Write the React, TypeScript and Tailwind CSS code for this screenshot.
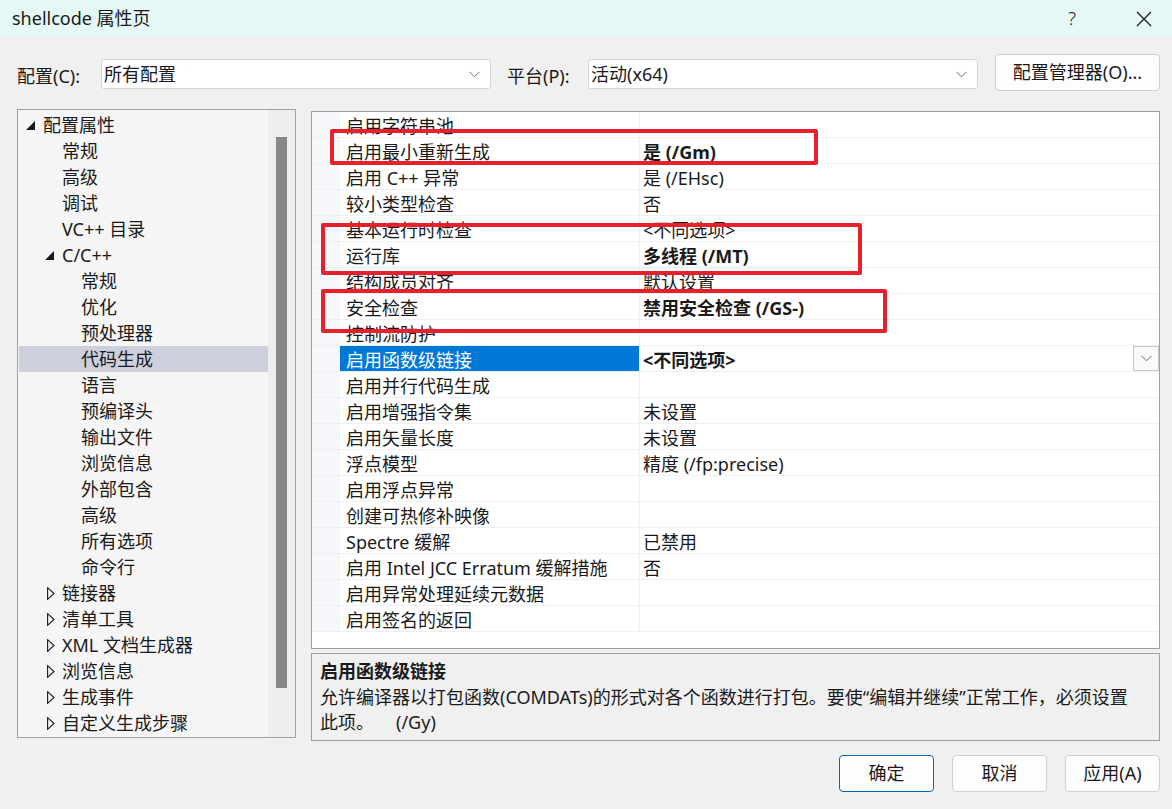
import React from "react";

const treeItems: { label: string; level: number; glyph?: "open" | "closed"; selected?: boolean }[] = [
  { label: "配置属性", level: 0, glyph: "open" },
  { label: "常规", level: 1 },
  { label: "高级", level: 1 },
  { label: "调试", level: 1 },
  { label: "VC++ 目录", level: 1 },
  { label: "C/C++", level: 1, glyph: "open" },
  { label: "常规", level: 2 },
  { label: "优化", level: 2 },
  { label: "预处理器", level: 2 },
  { label: "代码生成", level: 2, selected: true },
  { label: "语言", level: 2 },
  { label: "预编译头", level: 2 },
  { label: "输出文件", level: 2 },
  { label: "浏览信息", level: 2 },
  { label: "外部包含", level: 2 },
  { label: "高级", level: 2 },
  { label: "所有选项", level: 2 },
  { label: "命令行", level: 2 },
  { label: "链接器", level: 1, glyph: "closed" },
  { label: "清单工具", level: 1, glyph: "closed" },
  { label: "XML 文档生成器", level: 1, glyph: "closed" },
  { label: "浏览信息", level: 1, glyph: "closed" },
  { label: "生成事件", level: 1, glyph: "closed" },
  { label: "自定义生成步骤", level: 1, glyph: "closed" },
];

const levelPad = ["pl-[7px]", "pl-[26px]", "pl-[45px]"];

const rows: { name: string; value: string; bold?: boolean; selected?: boolean }[] = [
  { name: "启用字符串池", value: "" },
  { name: "启用最小重新生成", value: "是 (/Gm)", bold: true },
  { name: "启用 C++ 异常", value: "是 (/EHsc)" },
  { name: "较小类型检查", value: "否" },
  { name: "基本运行时检查", value: "<不同选项>" },
  { name: "运行库", value: "多线程 (/MT)", bold: true },
  { name: "结构成员对齐", value: "默认设置" },
  { name: "安全检查", value: "禁用安全检查 (/GS-)", bold: true },
  { name: "控制流防护", value: "" },
  { name: "启用函数级链接", value: "<不同选项>", bold: true, selected: true },
  { name: "启用并行代码生成", value: "" },
  { name: "启用增强指令集", value: "未设置" },
  { name: "启用矢量长度", value: "未设置" },
  { name: "浮点模型", value: "精度 (/fp:precise)" },
  { name: "启用浮点异常", value: "" },
  { name: "创建可热修补映像", value: "" },
  { name: "Spectre 缓解", value: "已禁用" },
  { name: "启用 Intel JCC Erratum 缓解措施", value: "否" },
  { name: "启用异常处理延续元数据", value: "" },
  { name: "启用签名的返回", value: "" },
];

function Chevron() {
  return (
    <svg width="11" height="7" viewBox="0 0 11 7" className="shrink-0">
      <path d="M0.5 0.8 L5.5 5.8 L10.5 0.8" fill="none" stroke="#6b6b6b" strokeWidth="1" />
    </svg>
  );
}

function Combo({ value, width }: { value: string; width: string }) {
  return (
    <div
      className={`${width} mt-[5px] h-[30px] flex items-center justify-between bg-white border border-[#d4d4d4] rounded-[3px] pl-[2px] pr-[10px]`}
    >
      <span className="leading-[28px]">{value}</span>
      <Chevron />
    </div>
  );
}

export default function App() {
  return (
    <div className="relative w-[1172px] h-[809px] overflow-hidden bg-[#f0f0f0] text-[18px] text-[#1a1a1a] font-['Noto_Sans','Noto_Sans_CJK_SC',sans-serif]">
      {/* Title bar */}
      <div className="h-[37px] bg-[#e5f8f6] flex items-center pl-[12px]">
        <span className="leading-[37px] flex-1">shellcode 属性页</span>
        <span className="font-light leading-[37px] w-[12px] text-center text-[19px]">?</span>
        <div className="w-[58px]" />
        <svg width="16" height="16" viewBox="0 0 16 16" className="mr-[20px]">
          <path d="M1 1 L15 15 M15 1 L1 15" stroke="#1a1a1a" strokeWidth="1.3" fill="none" />
        </svg>
      </div>

      {/* Config row */}
      <div className="mt-[17px] h-[37px] flex items-start pl-[17px]">
        <span className="mt-[7px] leading-[30px] w-[84px]">配置(C):</span>
        <Combo value="所有配置" width="w-[390px]" />
        <span className="mt-[7px] leading-[30px] ml-[16px] w-[81px]">平台(P):</span>
        <Combo value="活动(x64)" width="w-[390px]" />
        <div className="ml-[17px] w-[165px] h-[37px] flex items-center justify-center bg-[#fdfdfd] border border-[#d0d0d0] rounded-[4px]">
          配置管理器(O)...
        </div>
      </div>

      {/* Main */}
      <div className="mt-[18px] flex pl-[17px]">
        {/* Tree */}
        <div className="w-[279px] h-[629px] border border-[#a0a0a0] bg-[#f5f5f5] flex">
          <div className="flex-1 pt-[2px] pl-[1px]">
            {treeItems.map((t, i) => (
              <div
                key={i}
                className={`h-[26px] flex items-center ${levelPad[t.level]} ${t.selected ? "bg-[#cdd0dc]" : ""}`}
              >
                <div className="w-[17px] h-[26px] flex items-center shrink-0">
                  {t.glyph === "open" && (
                    <svg width="9" height="9" viewBox="0 0 9 9" className="mt-[1px]">
                      <polygon points="9,0 9,9 0,9" fill="#1a1a1a" />
                    </svg>
                  )}
                  {t.glyph === "closed" && (
                    <svg width="8" height="13" viewBox="0 0 8 13" className="ml-[2px]">
                      <polygon points="0.6,0.6 7,6.5 0.6,12.4" fill="none" stroke="#1a1a1a" strokeWidth="1.1" />
                    </svg>
                  )}
                </div>
                <span className="leading-[26px] whitespace-nowrap">{t.label}</span>
              </div>
            ))}
          </div>
          <div className="w-[27px] bg-[#eeeeee] pl-[8px] pt-[27px]">
            <div className="w-[11px] h-[551px] bg-[#878787]" />
          </div>
        </div>

        {/* Right column */}
        <div className="ml-[15px] flex flex-col">
          <div className="mt-[2px] w-[849px] h-[538px] border border-[#a0a0a0] bg-white">
            {rows.map((r, i) => (
              <div key={i} className="h-[26px] flex border-b border-[#eef0f5]">
                <div className="w-[28px] bg-[#f5f7fa] shrink-0" />
                <div
                  className={`w-[300px] h-[25px] shrink-0 border-r border-[#eef0f5] pl-[6px] leading-[29px] whitespace-nowrap ${
                    r.selected ? "bg-[#0078d7] text-white" : ""
                  }`}
                >
                  {r.name}
                </div>
                <div className="flex-1 h-[25px] flex items-start justify-between pl-[3px]">
                  <span className={`leading-[29px] whitespace-nowrap ${r.bold ? "font-bold" : ""}`}>{r.value}</span>
                  {r.selected && (
                    <div className="w-[26px] h-[25px] border border-[#c8c8c8] bg-[#fafafa] flex items-center justify-center">
                      <Chevron />
                    </div>
                  )}
                </div>
              </div>
            ))}
          </div>

          {/* Description */}
          <div className="mt-[4px] w-[849px] h-[88px] border border-[#a0a0a0] bg-[#f0f0f0] pl-[8px] pt-[5px]">
            <div className="font-bold leading-[25px]">启用函数级链接</div>
            <div className="leading-[26px] whitespace-nowrap">
              允许编译器以打包函数(COMDATs)的形式对各个函数进行打包。要使“编辑并继续”正常工作，必须设置
            </div>
            <div className="leading-[24px] whitespace-nowrap flex">
              <span>此项。</span>
              <span className="ml-[22px]">(/Gy)</span>
            </div>
          </div>

          {/* Buttons */}
          <div className="mt-[14px] flex justify-end gap-[18px] pr-0">
            <div className="w-[95px] h-[37px] flex items-center justify-center bg-[#fdfdfd] border border-[#0067c0] rounded-[4px]">
              确定
            </div>
            <div className="w-[95px] h-[37px] flex items-center justify-center bg-[#fdfdfd] border border-[#d0d0d0] rounded-[4px]">
              取消
            </div>
            <div className="w-[95px] h-[37px] flex items-center justify-center bg-[#fdfdfd] border border-[#d0d0d0] rounded-[4px]">
              应用(A)
            </div>
          </div>
        </div>
      </div>

      {/* Red annotation boxes */}
      <div className="absolute left-[330px] top-[129px] w-[488px] h-[36px] border-[4px] border-[#e8202c] rounded-[2px]" />
      <div className="absolute left-[321px] top-[223px] w-[541px] h-[52px] border-[4px] border-[#e8202c] rounded-[2px]" />
      <div className="absolute left-[321px] top-[289px] w-[566px] h-[44px] border-[4px] border-[#e8202c] rounded-[2px]" />
    </div>
  );
}
